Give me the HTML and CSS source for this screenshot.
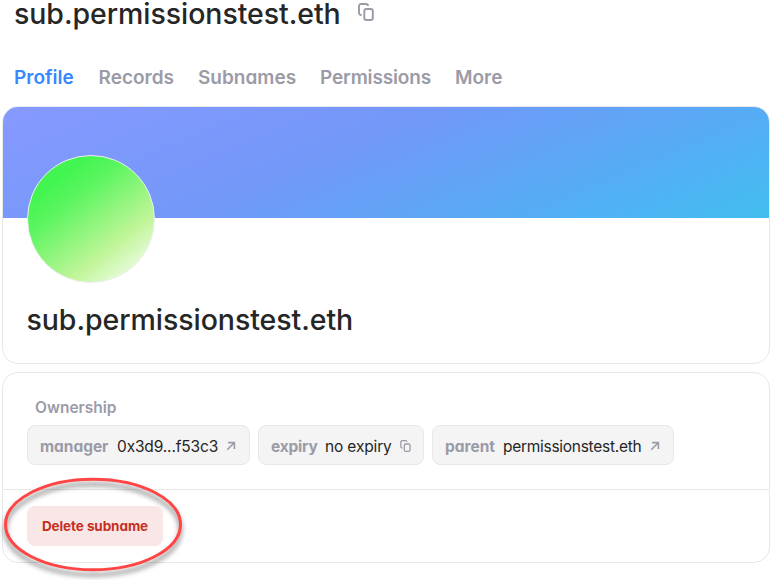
FILE: index.html
```html
<!DOCTYPE html>
<html lang="en">
<head>
<meta charset="utf-8">
<title>sub.permissionstest.eth</title>
<link rel="stylesheet" href="styles.css">
</head>
<body>
<svg class="defs" width="0" height="0" aria-hidden="true">
  <symbol id="copy" viewBox="0 0 16 18">
    <path d="M3.6 12H3a2 2 0 0 1-2-2V3a2 2 0 0 1 2-2h5a2 2 0 0 1 2 2"/>
    <rect x="6.3" y="6" width="8.5" height="11" rx="2"/>
  </symbol>
  <symbol id="arrow" viewBox="0 0 10 10">
    <path d="M2 1.6h6.4v6.4M8.2 1.8L1.2 8.8"/>
  </symbol>
</svg>
<main class="page">
  <header class="heading">
    <h1 class="title"><span class="name">sub.permissionstest.eth</span></h1>
    <svg class="icon icon-copy"><use href="#copy"/></svg>
  </header>
  <nav class="tabs">
    <a class="tab tab-profile active">Profile</a>
    <a class="tab tab-records">Records</a>
    <a class="tab tab-subnames">Subnames</a>
    <a class="tab tab-permissions">Permissions</a>
    <a class="tab tab-more">More</a>
  </nav>
  <section class="card profile">
    <div class="banner"></div>
    <div class="avatar"></div>
    <h2 class="name">sub.permissionstest.eth</h2>
  </section>
  <section class="card details">
    <div class="ownership">
      <h3 class="label">Ownership</h3>
      <div class="chips">
        <div class="chip chip-manager"><span class="key">manager</span><span class="value">0x3d9...f53c3</span><svg class="icon icon-arrow"><use href="#arrow"/></svg></div>
        <div class="chip chip-expiry"><span class="key">expiry</span><span class="value">no expiry</span><svg class="icon icon-copy small"><use href="#copy"/></svg></div>
        <div class="chip chip-parent"><span class="key">parent</span><span class="value">permissionstest.eth</span><svg class="icon icon-arrow"><use href="#arrow"/></svg></div>
      </div>
    </div>
    <div class="actions">
      <button class="delete">Delete subname</button>
      <svg class="highlight" viewBox="0 0 196 112"><ellipse cx="93" cy="55.5" rx="87.5" ry="45.3"/></svg>
    </div>
  </section>
</main>
</body>
</html>
```

FILE: styles.css
```css
* { box-sizing: border-box; }
html { overflow: hidden; }
body {
  margin: 0;
  height: 580px;
  overflow: hidden;
  background: #fff;
  color: #262626;
  font-family: Inter, "Liberation Sans", sans-serif;
  font-feature-settings: "cv11";
}
h1, h2, h3 { margin: 0; font-weight: 500; }
.defs { position: absolute; }
.icon { flex: none; fill: none; stroke: #9b9ba7; stroke-width: 1.9; }
.page { display: flex; flex-direction: column; padding-left: 2px; }

.heading { display: flex; height: 27px; padding-left: 12px; }
.title { width: 344px; height: 27px; }
.name {
  display: block;
  font-size: 28.5px;
  line-height: 27px;
  letter-spacing: -0.06px;
  font-weight: 550;
  white-space: nowrap;
}
.heading .icon { width: 16px; height: 18px; margin-top: 3px; }

.tabs { display: flex; height: 79px; padding: 37px 0 0 12px; }
.tab { font-size: 19px; line-height: 28px; font-weight: 600; color: #9b9ba7; white-space: nowrap; }
.tab.active { color: #3888ff; }
.tab-profile { width: 84.5px; }
.tab-records { width: 99.5px; }
.tab-subnames { width: 122px; }
.tab-permissions { width: 135px; letter-spacing: -0.15px; }

.card { width: 768px; border: 1px solid #e8e8e8; border-radius: 16px; background: #fff; }
.profile { height: 258px; overflow: hidden; }
.banner { height: 111px; background: linear-gradient(157deg, #8699ff 2%, #7298f8 43%, #52aff5 79%, #44bcf0 97%); }
.avatar {
  position: relative;
  width: 128px;
  height: 128px;
  margin: -63px 0 0 24px;
  border-radius: 50%;
  border: 1px solid #eeeeee;
  background: linear-gradient(142deg, #42f550 20%, #59f55e 34%, #c1f599 70%, #dffacd 84%, #e8fbdc 100%);
}
.profile .name { margin: 23px 0 0 23.5px; }

.details { height: 191px; margin-top: 8px; }
.ownership { height: 117px; padding: 24px; border-bottom: 1px solid #e8e8e8; }
.label { padding-left: 8px; height: 28px; font-size: 15.5px; line-height: 22px; font-weight: 600; color: #9b9ba7; }
.chips { display: flex; gap: 8px; }
.chip {
  display: flex;
  align-items: center;
  height: 40px;
  padding: 3px 12px 0;
  border: 1px solid #e8e8e8;
  border-radius: 8px;
  background: #f4f4f4;
  font-size: 15.5px;
  white-space: nowrap;
}
.key { color: #9b9ba7; font-weight: 700; }
.value { letter-spacing: -0.15px; }
.chip-manager { width: 223px; }
.chip-manager .key { width: 77px; letter-spacing: -0.05px; }
.chip-manager .value { width: 109px; }
.chip-expiry { width: 166px; }
.chip-expiry .key { width: 54px; letter-spacing: -0.2px; }
.chip-expiry .value { width: 75px; }
.chip-parent { width: 242px; }
.chip-parent .key { width: 58px; }
.chip-parent .value { width: 147px; letter-spacing: -0.28px; }
.icon-arrow { width: 10px; height: 10px; margin-top: -2px; stroke-width: 1.6; }
.icon-copy.small { width: 11px; height: 12px; margin-top: -2px; }

.actions { position: relative; padding: 16px 24px; }
.delete {
  width: 136px;
  height: 40px;
  padding: 0;
  border: 0;
  border-radius: 8px;
  background: #f9e7e7;
  color: #c6301f;
  font: 700 13.5px Inter, "Liberation Sans", sans-serif;
  font-feature-settings: inherit;
  letter-spacing: -0.08px;
  white-space: nowrap;
}
.highlight {
  position: absolute;
  left: -3px;
  top: -21px;
  width: 196px;
  height: 112px;
  overflow: visible;
  fill: none;
  stroke: #ff4545;
  stroke-width: 3;
  filter: drop-shadow(0 5px 2.5px rgba(0, 0, 0, 0.5));
}
```
